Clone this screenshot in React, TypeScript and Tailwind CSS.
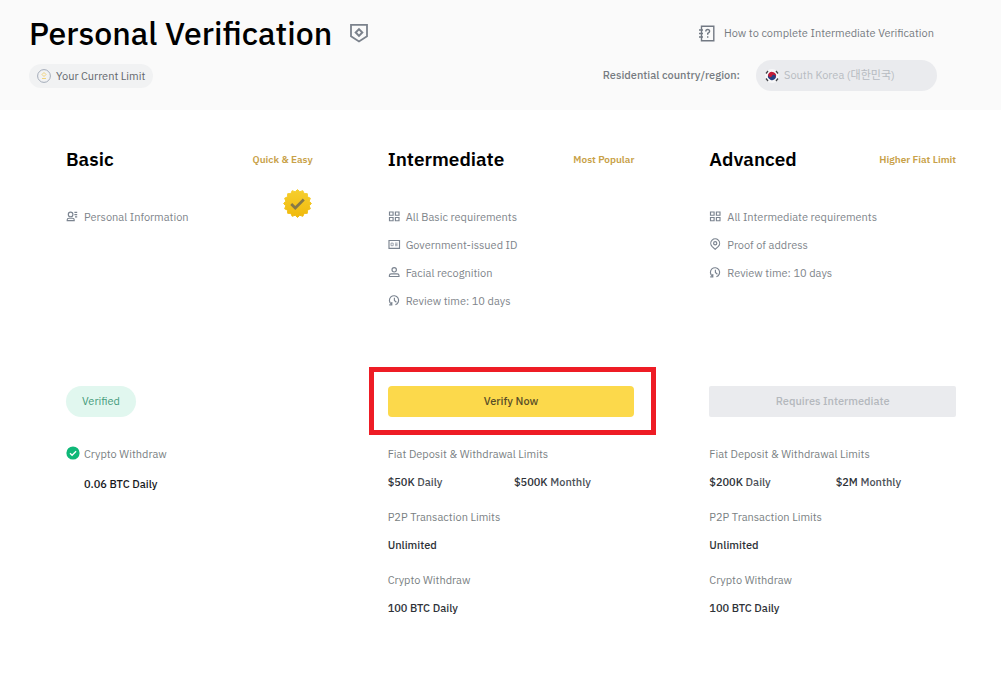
import type { ReactNode } from "react";

type IconName = "person" | "grid" | "id" | "face" | "clock" | "pin";

const shapes: Record<IconName, ReactNode> = {
  person: (
    <>
      <circle cx="4.6" cy="3.4" r="2.3" />
      <path d="M1.2 9.6V8.8q0-1.6 1.8-1.6h3.4q1.8 0 1.8 1.6v.8zM8.4 1.4h2.8M8.4 3.6h2.8M9 5.8h2.2" />
    </>
  ),
  grid: <path d="M1.5 1h3.6v3.2H1.5zM7.4 1H11v3.2H7.4zM1.5 6.5h3.6v3.2H1.5zM7.4 6.5H11v3.2H7.4z" />,
  id: (
    <>
      <path d="M1 1.5h10.5v7.8H1z" />
      <path d="M3 4.1h2.2v2.6H3zM7 4.1h2.6M7 5.4h2.6M7 6.7h2.6" strokeWidth="0.7" />
    </>
  ),
  face: (
    <>
      <circle cx="6.2" cy="2.8" r="2.2" />
      <path d="M1.4 9.5v-1q0-1.6 1.8-1.6h6Q11 6.9 11 8.5v1z" />
    </>
  ),
  clock: <path d="M3.4 9.1A4.6 4.6 0 1 1 7.4 9.7M1.2 9.8h2.6V6.9M6.4 2.7v2.8l2 1.8" />,
  pin: (
    <>
      <path d="M6.2 10.3 3 7.3a4.4 4.4 0 1 1 6.4 0z" />
      <circle cx="6.2" cy="4.2" r="1.6" />
    </>
  ),
};

function Icon({ name }: { name: IconName }) {
  return (
    <svg viewBox="0 0 12 12" className="size-3 shrink-0 overflow-visible" fill="none" stroke="#7b8490" strokeWidth="1.15" aria-hidden="true">
      {shapes[name]}
    </svg>
  );
}

interface Limit {
  label: string;
  values: [string, string?][];
}

interface PlanProps {
  title: string;
  tag: string;
  items: { icon: IconName; text: string }[];
  badge?: ReactNode;
  action: ReactNode;
  children: ReactNode;
}

function Plan({ title, tag, items, badge, action, children }: PlanProps) {
  return (
    <section>
      <div className="flex h-7 items-center justify-between">
        <h2 className="text-[19px] font-semibold text-black">{title}</h2>
        <span className="text-[10px] font-semibold text-[#c8a148]">{tag}</span>
      </div>
      <div className="mt-3 flex h-[201px] items-start justify-between">
        <ul className="mt-[18px]">
          {items.map((item) => (
            <li key={item.text} className="flex h-7 items-center gap-1.5 text-[11px] text-[#80858b]">
              <Icon name={item.icon} />
              {item.text}
            </li>
          ))}
        </ul>
        {badge}
      </div>
      {action}
      <div className="mt-[23px]">{children}</div>
    </section>
  );
}

function Limits({ rows }: { rows: Limit[] }) {
  return (
    <dl className="flex flex-col gap-[7px] text-[11px] leading-7">
      {rows.map((row) => (
        <div key={row.label}>
          <dt className="text-[#7a7f83]">{row.label}</dt>
          <dd className="grid grid-cols-2 gap-1.5 font-medium text-[#2e3238]">
            {row.values.map(([amount, period]) => (
              <span key={amount} className="whitespace-nowrap">
                {amount}
                {period && <span className="text-[#4b5057]"> {period}</span>}
              </span>
            ))}
          </dd>
        </div>
      ))}
    </dl>
  );
}

function Rosette() {
  const points = Array.from({ length: 32 }, (_, i) => {
    const r = i % 2 ? 12.4 : 14.4;
    const a = (i * Math.PI) / 16;
    return `${(15 + r * Math.cos(a)).toFixed(2)},${(15 + r * Math.sin(a)).toFixed(2)}`;
  }).join(" ");
  return (
    <svg viewBox="0 0 30 30" className="mt-1 mr-px size-[29px]" aria-hidden="true">
      <defs>
        <linearGradient id="gold" x1="0" y1="0" x2="0" y2="1">
          <stop offset="0" stopColor="#f6cf2f" />
          <stop offset="1" stopColor="#f0b90b" />
        </linearGradient>
      </defs>
      <polygon points={points} fill="url(#gold)" stroke="url(#gold)" strokeLinejoin="round" />
      <path d="M8.5 15.5l4.2 4.2 8.8-8.8" fill="none" stroke="#857848" strokeWidth="2.8" />
    </svg>
  );
}

function Flag() {
  return (
    <svg viewBox="0 0 14 14" className="size-[14px] shrink-0" aria-hidden="true">
      <circle cx="7" cy="7" r="7" fill="#f7f7f8" />
      <g transform="rotate(25 7 7)">
        <path d="M3 7a4 4 0 0 1 8 0z" fill="#c41d38" />
        <path d="M3 7a4 4 0 0 0 8 0z" fill="#274184" />
        <circle cx="5" cy="7" r="2" fill="#c41d38" />
        <circle cx="9" cy="7" r="2" fill="#274184" />
      </g>
      <path d="M1 4.5l2-2.5M11 2l2 2.5M1 9.5L3 12M11 12l2-2.5" stroke="#44464b" strokeWidth="1.3" />
    </svg>
  );
}

export default function App() {
  return (
    <main className="min-h-screen bg-white font-['IBM_Plex_Sans',Roboto,'Noto_Sans_CJK_KR',sans-serif]">
      <header className="flex h-[110px] justify-between bg-[#fafafa] pr-16 pl-[29px]">
        <div>
          <div className="mt-[13px] flex h-10 items-center gap-[18px]">
            <h1 className="text-[32px] font-medium whitespace-nowrap text-black">Personal Verification</h1>
            <svg viewBox="0 0 18 20" className="h-5 w-[18px]" fill="none" stroke="#7b828c" strokeWidth="1.8" aria-hidden="true">
              <path d="M1 1.8h16v11.5l-8 5.2-8-5.2z" />
              <path d="M9 6.1l3.3 3.4L9 12.9 5.7 9.5z" strokeWidth="2" />
            </svg>
          </div>
          <button type="button" className="mt-[11px] flex h-6 items-center gap-[5px] rounded-full bg-[#f1f2f3] px-2 text-[11px] whitespace-nowrap text-[#63676d]">
            <svg viewBox="0 0 14 14" className="size-[14px]" fill="none" aria-hidden="true">
              <circle cx="7" cy="7" r="6.4" stroke="#a4acb9" />
              <path d="M7 3.5l2 2-2 2-2-2zM5 9.5h4" stroke="#f0d27c" />
            </svg>
            Your Current Limit
          </button>
        </div>
        <div className="flex flex-col items-end">
          <a href="#guide" className="mt-[21px] flex h-6 items-center gap-[9px] pr-[3px] text-[11px] whitespace-nowrap text-[#777c82]">
            <svg viewBox="0 0 16 17" className="h-[17px] w-4" fill="none" stroke="#727983" strokeWidth="1.4" aria-hidden="true">
              <path d="M2.5 1.2h12.3v14.6H2.5zM0 5h4M0 8.5h4M0 12h4" />
              <path d="M6.8 6.4q0-1.9 1.9-1.9t1.9 1.7q0 1.1-1.9 2.2v1.4M8.7 11.2v1.6" />
            </svg>
            How to complete Intermediate Verification
          </a>
          <div className="mt-[15px] flex items-center gap-4">
            <label htmlFor="region" className="text-[11px] font-medium whitespace-nowrap text-[#777c82]">
              Residential country/region:
            </label>
            <div className="flex h-[31px] w-[181px] items-center gap-[5px] rounded-full bg-[#eaebee] pr-3 pl-[9px]">
              <Flag />
              <select id="region" disabled className="min-w-0 flex-1 appearance-none bg-transparent text-[11px] text-[#b7bbc1] opacity-100">
                <option>South Korea (대한민국)</option>
              </select>
            </div>
          </div>
        </div>
      </header>

      <div className="grid grid-cols-3 gap-[75px] pt-[35px] pr-[45px] pl-[66px]">
        <Plan
          title="Basic"
          tag="Quick & Easy"
          items={[{ icon: "person", text: "Personal Information" }]}
          badge={<Rosette />}
          action={
            <div className="flex h-[31px] w-fit items-center rounded-full bg-[#e1f7ef] px-4 text-[11px] text-[#459b7b]">Verified</div>
          }
        >
          <div className="flex items-start gap-1">
            <svg viewBox="0 0 14 14" className="mt-1.5 size-[14px]" aria-hidden="true">
              <circle cx="7" cy="7" r="6.6" fill="#0fb878" />
              <path d="M4 7.2l2.1 2.1 4-4" fill="none" stroke="#fff" strokeWidth="1.3" />
            </svg>
            <dl className="text-[11px] leading-7">
              <dt className="text-[#7a7f83]">Crypto Withdraw</dt>
              <dd className="mt-[2px] font-medium text-[#17191d]">0.06 BTC Daily</dd>
            </dl>
          </div>
        </Plan>
        <Plan
          title="Intermediate"
          tag="Most Popular"
          items={[
            { icon: "grid", text: "All Basic requirements" },
            { icon: "id", text: "Government-issued ID" },
            { icon: "face", text: "Facial recognition" },
            { icon: "clock", text: "Review time: 10 days" },
          ]}
          action={
            <div className="relative">
              <button type="button" className="block h-[31px] w-full rounded bg-[#fcd94b] text-[11px] font-medium text-[#594e27]">
                Verify Now
              </button>
              <div className="pointer-events-none absolute -top-[19px] -right-[22px] -bottom-[18px] -left-[19px] border-5 border-[#ee1c25]" />
            </div>
          }
        >
          <Limits
            rows={[
              { label: "Fiat Deposit & Withdrawal Limits", values: [["$50K", "Daily"], ["$500K", "Monthly"]] },
              { label: "P2P Transaction Limits", values: [["Unlimited"]] },
              { label: "Crypto Withdraw", values: [["100 BTC Daily"]] },
            ]}
          />
        </Plan>
        <Plan
          title="Advanced"
          tag="Higher Fiat Limit"
          items={[
            { icon: "grid", text: "All Intermediate requirements" },
            { icon: "pin", text: "Proof of address" },
            { icon: "clock", text: "Review time: 10 days" },
          ]}
          action={
            <button type="button" disabled className="block h-[31px] w-full rounded-xs bg-[#eaebee] text-[11px] font-medium text-[#b4b8bd]">
              Requires Intermediate
            </button>
          }
        >
          <Limits
            rows={[
              { label: "Fiat Deposit & Withdrawal Limits", values: [["$200K", "Daily"], ["$2M", "Monthly"]] },
              { label: "P2P Transaction Limits", values: [["Unlimited"]] },
              { label: "Crypto Withdraw", values: [["100 BTC Daily"]] },
            ]}
          />
        </Plan>
      </div>
    </main>
  );
}
